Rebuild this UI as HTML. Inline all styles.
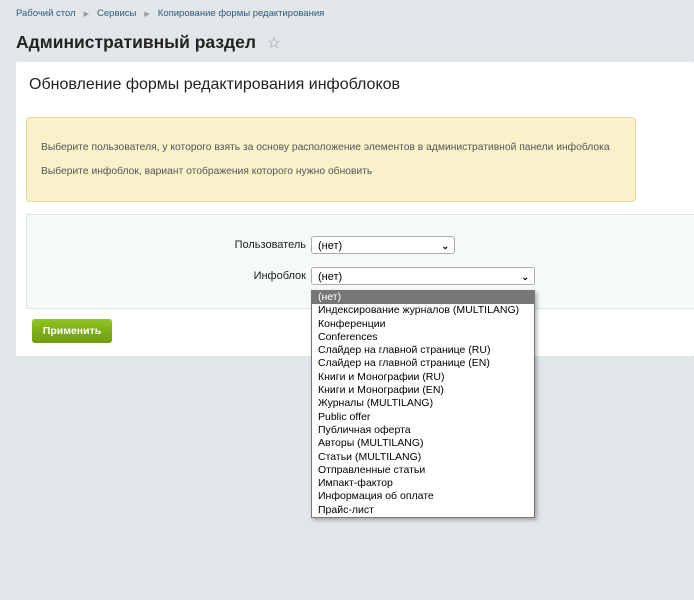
<!DOCTYPE html>
<html><head><meta charset="utf-8"><style>
body{margin:0;width:694px;height:600px;background:#e1e7e9;font-family:"Liberation Sans",sans-serif;position:relative;overflow:hidden}
.a{position:absolute}
.bc{top:8px;left:16px;font-size:9.5px;color:#2d5b7a}
.bc span{color:#999;margin:0 8px;font-size:7px}
h1{position:absolute;top:32px;left:16px;margin:0;font-size:17.5px;font-weight:bold;color:#222}
.panel{left:16px;top:62px;width:678px;height:294px;background:#fff;border-radius:2px}
.t{left:29px;top:76px;font-size:16px;color:#222}
.warn{left:26px;top:117px;width:608px;height:83px;background:#f8f1c9;border:1px solid #e3d99c;border-radius:4px;font-size:10.3px;color:#555}
.form{left:26px;top:214px;width:668px;height:93px;background:#f5f9f9;border:1px solid #dde3e5;border-right:none}
.lab{font-size:11px;color:#222;text-align:right}
.sel{background:#fff;border:1px solid #a8adb0;border-radius:3px;height:18px;font-size:11px;line-height:18px;padding-left:6px;box-sizing:border-box;color:#000}
.chev{position:absolute;right:5px;top:0;font-size:9px;font-weight:bold}
.btn{left:32px;top:319px;width:80px;height:24px;background:linear-gradient(#8fc520,#6d9c0f);border-radius:3px;color:#fff;font-size:10.5px;font-weight:bold;line-height:24px;text-align:center}
.dd{left:311px;top:290px;width:222px;background:#fff;border:1px solid #777;box-shadow:2px 2px 4px rgba(0,0,0,.3);font-size:10.5px;color:#000}
.dd div{height:13.3px;line-height:13.3px;padding-left:6px;white-space:nowrap}
.dd .s{background:#777;color:#fff}
</style></head><body>
<div class="a bc">Рабочий стол<span>▶</span>Сервисы<span>▶</span>Копирование формы редактирования</div>
<h1>Административный раздел <span style="font-size:16px;color:#999;font-weight:normal;margin-left:6px">☆</span></h1>
<div class="a panel"></div>
<div class="a t">Обновление формы редактирования инфоблоков</div>
<div class="a warn"><div class="a" style="left:14px;top:24px">Выберите пользователя, у которого взять за основу расположение элементов в административной панели инфоблока</div><div class="a" style="left:14px;top:48px">Выберите инфоблок, вариант отображения которого нужно обновить</div></div>
<div class="a form"></div>
<div class="a lab" style="left:200px;top:239px;width:106px">Пользователь</div>
<div class="a sel" style="left:311px;top:236px;width:144px">(нет)<span class="chev">⌄</span></div>
<div class="a lab" style="left:200px;top:270px;width:106px">Инфоблок</div>
<div class="a sel" style="left:311px;top:267px;width:224px">(нет)<span class="chev">⌄</span></div>
<div class="a btn">Применить</div>
<div class="a dd">
<div class="s">(нет)</div><div>Индексирование журналов (MULTILANG)</div><div>Конференции</div><div>Conferences</div><div>Слайдер на главной странице (RU)</div><div>Слайдер на главной странице (EN)</div><div>Книги и Монографии (RU)</div><div>Книги и Монографии (EN)</div><div>Журналы (MULTILANG)</div><div>Public offer</div><div>Публичная оферта</div><div>Авторы (MULTILANG)</div><div>Статьи (MULTILANG)</div><div>Отправленные статьи</div><div>Импакт-фактор</div><div>Информация об оплате</div><div>Прайс-лист</div>
</div>
</body></html>
